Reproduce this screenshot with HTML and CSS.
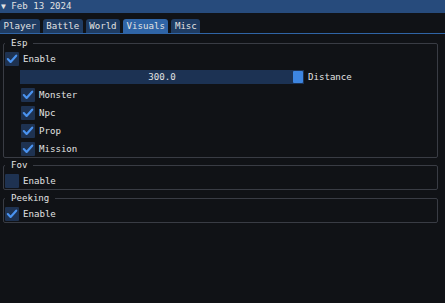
FILE: index.html
```html
<!DOCTYPE html>
<html lang="en">
<head>
    <meta charset="UTF-8">
    <meta name="viewport" content="width=device-width, initial-scale=1.0">
    <title>Visuals</title>
    <link rel="stylesheet" href="styles.css">
</head>
<body>
    <div class="titlebar"><span class="arrow">▼</span> Feb 13 2024</div>
    <div class="tabbar">
        <span class="tab">Player</span>
        <span class="tab">Battle</span>
        <span class="tab">World</span>
        <span class="tab active">Visuals</span>
        <span class="tab">Misc</span>
    </div>

    <fieldset class="group group-esp">
        <legend>Esp</legend>
        <div class="rows">
            <div class="check on"><span class="box"><svg viewBox="0 0 13 13"><path d="M2.6 6.6 L5.2 9.2 L10.4 3.4"/></svg></span>Enable</div>
            <div class="slider-row">
                <div class="slider"><span class="slider-value">300.0</span><span class="grab"></span></div>
                <span>Distance</span>
            </div>
            <div class="check on indent"><span class="box"><svg viewBox="0 0 13 13"><path d="M2.6 6.6 L5.2 9.2 L10.4 3.4"/></svg></span>Monster</div>
            <div class="check on indent"><span class="box"><svg viewBox="0 0 13 13"><path d="M2.6 6.6 L5.2 9.2 L10.4 3.4"/></svg></span>Npc</div>
            <div class="check on indent"><span class="box"><svg viewBox="0 0 13 13"><path d="M2.6 6.6 L5.2 9.2 L10.4 3.4"/></svg></span>Prop</div>
            <div class="check on indent"><span class="box"><svg viewBox="0 0 13 13"><path d="M2.6 6.6 L5.2 9.2 L10.4 3.4"/></svg></span>Mission</div>
        </div>
    </fieldset>

    <fieldset class="group group-fov">
        <legend>Fov</legend>
        <div class="rows">
            <div class="check"><span class="box"></span>Enable</div>
        </div>
    </fieldset>

    <fieldset class="group group-peeking">
        <legend>Peeking</legend>
        <div class="rows">
            <div class="check on"><span class="box"><svg viewBox="0 0 13 13"><path d="M2.6 6.6 L5.2 9.2 L10.4 3.4"/></svg></span>Enable</div>
        </div>
    </fieldset>
</body>
</html>
```

FILE: styles.css
```css
body {
    margin: 0;
    background-color: #101216;
    color: #e2e2e2;
    font-family: "DejaVu Sans Mono", "Liberation Mono", monospace;
    font-size: 9.1px;
}
.titlebar {
    height: 13px;
    line-height: 13px;
    background-color: #274b7c;
    padding-left: 1px;
    white-space: pre;
}
.arrow {
    font-size: 8px;
}
.tabbar {
    display: flex;
    gap: 3px;
    margin-top: 6px;
    border-bottom: 1px solid #2f64a6;
}
.tab {
    height: 14px;
    line-height: 14px;
    padding: 0 3.5px;
    background-color: #1f3c63;
    border-radius: 3px 3px 0 0;
}
.tab.active {
    background-color: #2f64a6;
}
.group {
    margin: 2px 7px 0 3px;
    padding: 0 1px 1px 1px;
    border: 1px solid #393c44;
    border-radius: 2px;
}
.group-esp {
    margin-top: 4px;
}
.group-peeking {
    margin-top: 3px;
}
.group legend {
    padding: 0 6px;
    line-height: 10px;
    margin-left: 0;
}
.rows {
    display: flex;
    flex-direction: column;
    gap: 4px;
    margin-top: 4px;
}
.check {
    display: flex;
    align-items: center;
    gap: 4px;
    height: 14px;
}
.check.indent {
    margin-left: 16px;
}
.box {
    width: 14px;
    height: 14px;
    background-color: #1e3251;
    border-radius: 1px;
}
.box svg {
    display: block;
    width: 14px;
    height: 14px;
}
.box path {
    fill: none;
    stroke: #4a93f0;
    stroke-width: 2;
    stroke-linecap: round;
    stroke-linejoin: round;
}
.slider-row {
    display: flex;
    align-items: center;
    gap: 4px;
    margin-left: 15px;
}
.slider {
    position: relative;
    width: 284px;
    height: 14px;
    line-height: 14px;
    background-color: #1c3253;
    text-align: center;
}
.grab {
    position: absolute;
    right: 1px;
    top: 1px;
    width: 10px;
    height: 12px;
    background-color: #3d85e0;
    border-radius: 1px;
}
```
